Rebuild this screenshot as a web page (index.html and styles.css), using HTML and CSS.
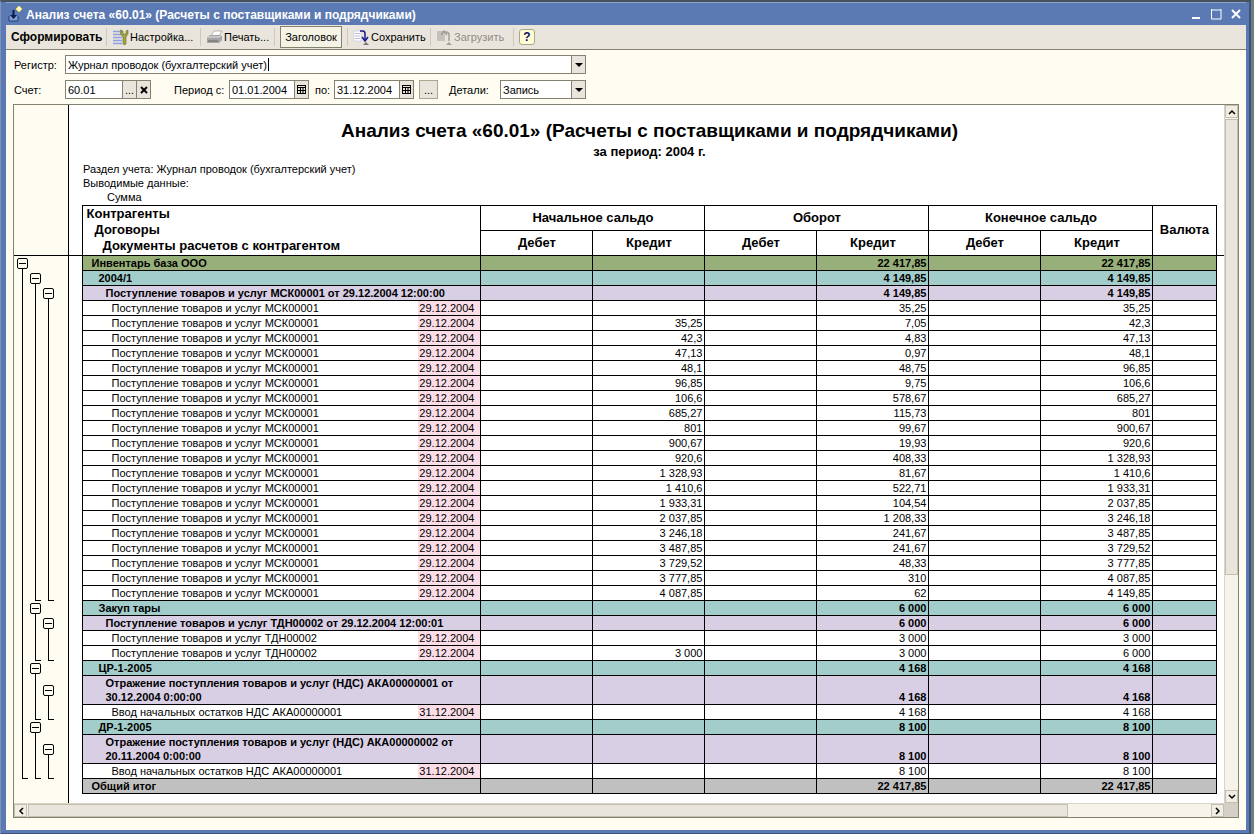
FILE: index.html
```html
<!DOCTYPE html>
<html lang="ru">
<head>
<meta charset="utf-8">
<title>Анализ счета «60.01»</title>
<link rel="stylesheet" href="styles.css">
</head>
<body>
<div class="window">
<header class="titlebar">
  <svg class="app-icon" width="16" height="18" viewBox="0 0 16 18"><path d="M1 11v5h9v-5" fill="#7f9fd0" stroke="#23407c"/><path d="M4.500 5h2v5h2.500l-3.500 4-3.500-4h2.500z" fill="#0b1c4c"/><path d="M11 1l3 3-3 3-3-3z" fill="#fffbc0" stroke="#f0e060"/></svg>
  <h1 class="caption">Анализ счета «60.01» (Расчеты с поставщиками и подрядчиками)</h1>
  <div class="window-buttons">
    <button type="button" aria-label="Свернуть"><svg width="12" height="12"><path d="M2 10h8" stroke="#fff" stroke-width="2"/></svg></button>
    <button type="button" aria-label="Развернуть"><svg width="12" height="12"><path d="M1 2h10M1.500 1v10h9.500V1" fill="none" stroke="#fff"/></svg></button>
    <button type="button" aria-label="Закрыть"><svg width="12" height="12"><path d="M2 2l8 8M10 2l-8 8" stroke="#fff" stroke-width="2"/></svg></button>
  </div>
</header>
<div class="client">
<nav class="toolbar">
  <button type="button" class="tool tool-main">Сформировать</button>
  <span class="divider"></span>
  <button type="button" class="tool tool-settings"><svg width="17" height="17" viewBox="0 0 17 17"><path d="M1 2.500h9M1 5.500h9M1 8.500h9M1 11.500h9M1 14.500h9" stroke="#8f9fe0" stroke-width="1.500"/><path d="M8.500 1v4l2.500 3v7q1.500 1.500 3 0V8l2-3V1l-2 1v3h-3V2z" fill="#a3a24a" stroke="#6d6d25" stroke-width=".6"/></svg>Настройка...</button>
  <span class="divider"></span>
  <button type="button" class="tool tool-print"><svg width="17" height="17" viewBox="0 0 17 17"><path d="M5 7l3-5h8l-3 5z" fill="#fff" stroke="#999" stroke-width=".7"/><path d="M1 8l3-2h12v5l-3 3H1z" fill="#a5a5a5"/><path d="M1 8h12l3-2" fill="none" stroke="#e8e8e8"/><path d="M2 12h10" stroke="#666"/></svg>Печать...</button>
  <span class="divider"></span>
  <button type="button" class="tool tool-pressed" aria-pressed="true">Заголовок</button>
  <span class="divider"></span>
  <button type="button" class="tool tool-save"><svg width="17" height="17" viewBox="0 0 17 17"><path d="M1 2h7v10H1z" fill="#fff" stroke="#c5c9e6" stroke-width=".7"/><path d="M2 4.500h5M2 7h5M2 9.500h5" stroke="#b7bce0"/><path d="M7 2h3q2 0 2 3v6" fill="none" stroke="#17178a" stroke-width="1.500"/><path d="M9 8l3 4 3-4" fill="none" stroke="#17178a" stroke-width="1.500"/><path d="M10 16l3-3 3 3z" fill="#777"/></svg>Сохранить</button>
  <span class="divider"></span>
  <button type="button" class="tool tool-load" disabled><svg width="17" height="17" viewBox="0 0 17 17"><path d="M1 2h8v10H1z" fill="#c4c2bc"/><path d="M5 6l3-4 3 4M8 3h2q3 0 3 3v6" fill="none" stroke="#a09e98" stroke-width="1.500"/><path d="M10 16l3-3 3 3z" fill="#a09e98"/></svg>Загрузить</button>
  <span class="divider"></span>
  <button type="button" class="help" aria-label="Справка">?</button>
</nav>
<form class="filters">
  <div class="filter-row">
    <label class="lead" for="register">Регистр:</label>
    <div class="field field-register"><input id="register" value="Журнал проводок (бухгалтерский учет)"><span class="caret"></span><button type="button" aria-label="Выбрать"><svg width="8" height="4"><path d="M0 0h8L4 4z"/></svg></button></div>
  </div>
  <div class="filter-row">
    <label class="lead" for="account">Счет:</label>
    <div class="field field-account"><input id="account" value="60.01"><button type="button">...</button><button type="button" aria-label="Очистить"><svg width="8" height="8"><path d="M1 1l6 6M7 1L1 7" stroke="#000" stroke-width="2"/></svg></button></div>
    <label class="label-from" for="from">Период с:</label>
    <div class="field field-date"><input id="from" value="01.01.2004"><button type="button" aria-label="Календарь"><svg width="9" height="10"><path d="M0 .500h9M0 2.500h9M0 5.500h9M0 8.500h9M.500 0v9M3.500 2v7M6 2v7M8.500 0v9" stroke="#000"/></svg></button></div>
    <label class="label-to" for="to">по:</label>
    <div class="field field-date"><input id="to" value="31.12.2004"><button type="button" aria-label="Календарь"><svg width="9" height="10"><path d="M0 .500h9M0 2.500h9M0 5.500h9M0 8.500h9M.500 0v9M3.500 2v7M6 2v7M8.500 0v9" stroke="#000"/></svg></button></div>
    <button type="button" class="period">...</button>
    <label class="label-details" for="details">Детали:</label>
    <div class="field field-details"><select id="details"><option>Запись</option></select><span class="drop"><svg width="8" height="4"><path d="M0 0h8L4 4z"/></svg></span></div>
  </div>
</form>
<main class="sheet">
<table class="report">
<colgroup><col class="c-gutter"><col class="c-margin"><col><col class="c-date"><col class="c-sum"><col class="c-sum"><col class="c-sum"><col class="c-sum"><col class="c-sum"><col class="c-sum"><col class="c-currency"><col class="c-edge"></colgroup>
<thead>
<tr><td class="gutter gutter-top" rowspan="3"></td><td class="ruled" rowspan="3"></td><td class="intro" colspan="9"><h2>Анализ счета «60.01» (Расчеты с поставщиками и подрядчиками)</h2><p class="span">за период: 2004 г.</p><p class="note">Раздел учета: Журнал проводок (бухгалтерский учет)</p><p class="note">Выводимые данные:</p><p class="note note-sub">Сумма</p></td><td class="ruled" rowspan="3"></td></tr>
<tr class="head"><th class="dims" colspan="2" rowspan="2"><div>Контрагенты</div><div class="in-1">Договоры</div><div class="in-2">Документы расчетов с контрагентом</div></th><th colspan="2">Начальное сальдо</th><th colspan="2">Оборот</th><th colspan="2">Конечное сальдо</th><th rowspan="2">Валюта</th></tr>
<tr class="head"><th>Дебет</th><th>Кредит</th><th>Дебет</th><th>Кредит</th><th>Дебет</th><th>Кредит</th></tr>
</thead>
<tbody>
<tr class="party"><td class="gutter" rowspan="35"><div class="tree">
<div class="node n-party"><button type="button" aria-label="Свернуть"></button></div>
<div class="node n-a"><button type="button" aria-label="Свернуть"></button></div>
<div class="node n-a-doc"><button type="button" aria-label="Свернуть"></button></div>
<div class="node n-b"><button type="button" aria-label="Свернуть"></button></div>
<div class="node n-b-doc"><button type="button" aria-label="Свернуть"></button></div>
<div class="node n-c"><button type="button" aria-label="Свернуть"></button></div>
<div class="node n-c-doc tall"><button type="button" aria-label="Свернуть"></button></div>
<div class="node n-d"><button type="button" aria-label="Свернуть"></button></div>
<div class="node n-d-doc tall"><button type="button" aria-label="Свернуть"></button></div>
</div></td><td class="blank" rowspan="35"></td><td colspan="2">Инвентарь база ООО</td><td></td><td></td><td></td><td>22 417,85</td><td></td><td>22 417,85</td><td></td><td class="blank" rowspan="35"></td></tr>
<tr class="contract"><td colspan="2">2004/1</td><td></td><td></td><td></td><td>4 149,85</td><td></td><td>4 149,85</td><td></td></tr>
<tr class="doc"><td colspan="2">Поступление товаров и услуг МСК00001 от 29.12.2004 12:00:00</td><td></td><td></td><td></td><td>4 149,85</td><td></td><td>4 149,85</td><td></td></tr>
<tr class="entry"><td>Поступление товаров и услуг МСК00001</td><td>29.12.2004</td><td></td><td></td><td></td><td>35,25</td><td></td><td>35,25</td><td></td></tr>
<tr class="entry"><td>Поступление товаров и услуг МСК00001</td><td>29.12.2004</td><td></td><td>35,25</td><td></td><td>7,05</td><td></td><td>42,3</td><td></td></tr>
<tr class="entry"><td>Поступление товаров и услуг МСК00001</td><td>29.12.2004</td><td></td><td>42,3</td><td></td><td>4,83</td><td></td><td>47,13</td><td></td></tr>
<tr class="entry"><td>Поступление товаров и услуг МСК00001</td><td>29.12.2004</td><td></td><td>47,13</td><td></td><td>0,97</td><td></td><td>48,1</td><td></td></tr>
<tr class="entry"><td>Поступление товаров и услуг МСК00001</td><td>29.12.2004</td><td></td><td>48,1</td><td></td><td>48,75</td><td></td><td>96,85</td><td></td></tr>
<tr class="entry"><td>Поступление товаров и услуг МСК00001</td><td>29.12.2004</td><td></td><td>96,85</td><td></td><td>9,75</td><td></td><td>106,6</td><td></td></tr>
<tr class="entry"><td>Поступление товаров и услуг МСК00001</td><td>29.12.2004</td><td></td><td>106,6</td><td></td><td>578,67</td><td></td><td>685,27</td><td></td></tr>
<tr class="entry"><td>Поступление товаров и услуг МСК00001</td><td>29.12.2004</td><td></td><td>685,27</td><td></td><td>115,73</td><td></td><td>801</td><td></td></tr>
<tr class="entry"><td>Поступление товаров и услуг МСК00001</td><td>29.12.2004</td><td></td><td>801</td><td></td><td>99,67</td><td></td><td>900,67</td><td></td></tr>
<tr class="entry"><td>Поступление товаров и услуг МСК00001</td><td>29.12.2004</td><td></td><td>900,67</td><td></td><td>19,93</td><td></td><td>920,6</td><td></td></tr>
<tr class="entry"><td>Поступление товаров и услуг МСК00001</td><td>29.12.2004</td><td></td><td>920,6</td><td></td><td>408,33</td><td></td><td>1 328,93</td><td></td></tr>
<tr class="entry"><td>Поступление товаров и услуг МСК00001</td><td>29.12.2004</td><td></td><td>1 328,93</td><td></td><td>81,67</td><td></td><td>1 410,6</td><td></td></tr>
<tr class="entry"><td>Поступление товаров и услуг МСК00001</td><td>29.12.2004</td><td></td><td>1 410,6</td><td></td><td>522,71</td><td></td><td>1 933,31</td><td></td></tr>
<tr class="entry"><td>Поступление товаров и услуг МСК00001</td><td>29.12.2004</td><td></td><td>1 933,31</td><td></td><td>104,54</td><td></td><td>2 037,85</td><td></td></tr>
<tr class="entry"><td>Поступление товаров и услуг МСК00001</td><td>29.12.2004</td><td></td><td>2 037,85</td><td></td><td>1 208,33</td><td></td><td>3 246,18</td><td></td></tr>
<tr class="entry"><td>Поступление товаров и услуг МСК00001</td><td>29.12.2004</td><td></td><td>3 246,18</td><td></td><td>241,67</td><td></td><td>3 487,85</td><td></td></tr>
<tr class="entry"><td>Поступление товаров и услуг МСК00001</td><td>29.12.2004</td><td></td><td>3 487,85</td><td></td><td>241,67</td><td></td><td>3 729,52</td><td></td></tr>
<tr class="entry"><td>Поступление товаров и услуг МСК00001</td><td>29.12.2004</td><td></td><td>3 729,52</td><td></td><td>48,33</td><td></td><td>3 777,85</td><td></td></tr>
<tr class="entry"><td>Поступление товаров и услуг МСК00001</td><td>29.12.2004</td><td></td><td>3 777,85</td><td></td><td>310</td><td></td><td>4 087,85</td><td></td></tr>
<tr class="entry"><td>Поступление товаров и услуг МСК00001</td><td>29.12.2004</td><td></td><td>4 087,85</td><td></td><td>62</td><td></td><td>4 149,85</td><td></td></tr>
<tr class="contract"><td colspan="2">Закуп тары</td><td></td><td></td><td></td><td>6 000</td><td></td><td>6 000</td><td></td></tr>
<tr class="doc"><td colspan="2">Поступление товаров и услуг ТДН00002 от 29.12.2004 12:00:01</td><td></td><td></td><td></td><td>6 000</td><td></td><td>6 000</td><td></td></tr>
<tr class="entry"><td>Поступление товаров и услуг ТДН00002</td><td>29.12.2004</td><td></td><td></td><td></td><td>3 000</td><td></td><td>3 000</td><td></td></tr>
<tr class="entry"><td>Поступление товаров и услуг ТДН00002</td><td>29.12.2004</td><td></td><td>3 000</td><td></td><td>3 000</td><td></td><td>6 000</td><td></td></tr>
<tr class="contract"><td colspan="2">ЦР-1-2005</td><td></td><td></td><td></td><td>4 168</td><td></td><td>4 168</td><td></td></tr>
<tr class="doc"><td colspan="2">Отражение поступления товаров и услуг (НДС) АКА00000001 от<br>30.12.2004 0:00:00</td><td></td><td></td><td></td><td>4 168</td><td></td><td>4 168</td><td></td></tr>
<tr class="entry"><td>Ввод начальных остатков НДС АКА00000001</td><td>31.12.2004</td><td></td><td></td><td></td><td>4 168</td><td></td><td>4 168</td><td></td></tr>
<tr class="contract"><td colspan="2">ДР-1-2005</td><td></td><td></td><td></td><td>8 100</td><td></td><td>8 100</td><td></td></tr>
<tr class="doc"><td colspan="2">Отражение поступления товаров и услуг (НДС) АКА00000002 от<br>20.11.2004 0:00:00</td><td></td><td></td><td></td><td>8 100</td><td></td><td>8 100</td><td></td></tr>
<tr class="entry"><td>Ввод начальных остатков НДС АКА00000001</td><td>31.12.2004</td><td></td><td></td><td></td><td>8 100</td><td></td><td>8 100</td><td></td></tr>
<tr class="total"><td colspan="2">Общий итог</td><td></td><td></td><td></td><td>22 417,85</td><td></td><td>22 417,85</td><td></td></tr>
<tr class="tail"><td colspan="9"></td></tr>
</tbody>
</table>
<div class="scroll scroll-v"><button type="button" aria-label="Вверх"><svg width="8" height="8"><path d="M1 6l3-3 3 3" fill="none" stroke="#000" stroke-width="1.500"/></svg></button><div class="track"><div class="thumb"></div></div><button type="button" aria-label="Вниз"><svg width="8" height="8"><path d="M1 2l3 3 3-3" fill="none" stroke="#000" stroke-width="1.500"/></svg></button></div>
<div class="scroll scroll-h"><button type="button" aria-label="Влево"><svg width="8" height="8"><path d="M6 1L3 4l3 3" fill="none" stroke="#000" stroke-width="1.500"/></svg></button><div class="track"><div class="thumb"></div></div><button type="button" aria-label="Вправо"><svg width="8" height="8"><path d="M2 1l3 3-3 3" fill="none" stroke="#000" stroke-width="1.500"/></svg></button></div>
<div class="corner"></div>
</main>
</div>
</div>
</body>
</html>
```
FILE: styles.css
```css
* { box-sizing: border-box; }
body { margin: 0; font-family: "Liberation Sans", Arial, sans-serif; font-size: 11px; line-height: 14px; color: #000; background: #6f7f78; }
button, input, select { font: inherit; color: inherit; margin: 0; padding: 0; border: 0; border-radius: 0; background: none; }
svg { display: block; flex: none; }
h1, h2, p { margin: 0; }

.window { display: flex; flex-direction: column; min-height: 100vh; padding: 0 3px 3px 5px; margin-right: 3px; background: #5b7ab3; border-top: 2px solid #46535a; border-left: 1px solid #7d93b8; border-right: 2px solid #3b5180; border-bottom: 2px solid #3b5180; }
.titlebar { display: flex; align-items: center; height: 23px; padding: 0 4px 0 2px; color: #fff; border-top: 1px solid #8ba3cd; }
.app-icon { margin-right: 2px; }
.caption { flex: 1; font-size: 12px; line-height: 16px; padding-top: 1px; }
.window-buttons { display: flex; gap: 8px; }

.client { display: flex; flex-direction: column; flex: 1; background: #fffdf2; padding: 0 7px 12px; }
.toolbar { display: flex; align-items: center; height: 25px; margin: 0 -7px; padding: 0 5px; background: #e9e5dc; border-bottom: 1px solid #85816f; }
.tool { display: flex; align-items: center; gap: 1px; height: 22px; white-space: nowrap; }
.tool-main { font-size: 12px; font-weight: bold; width: 90px; }
.tool-settings { width: 83px; }
.tool-print { width: 63px; }
.tool-pressed { justify-content: center; width: 62px; border: 1px solid #85816f; background: #f5f2e6; }
.tool-save { width: 72px; }
.tool-load { width: 72px; color: #8f8c84; }
.divider { flex: none; width: 1px; height: 18px; margin: 0 5px; background: #cdc8ba; }
.help { width: 16px; height: 16px; border: 1px solid #aaa78c; border-radius: 3px; background: #ffffd8; color: #101060; font-size: 12px; font-weight: bold; line-height: 14px; }

.filters { display: flex; flex-direction: column; gap: 6px; padding: 5px 0; }
.filter-row { display: flex; align-items: center; padding-left: 1px; }
.lead { width: 51px; }
.field { position: relative; display: flex; height: 19px; border: 1px solid #85816f; background: #fff; }
.field input, .field select { flex: 1; min-width: 0; width: 100%; padding: 0 2px; outline: 0; appearance: none; }
.field button, .drop { display: flex; align-items: center; justify-content: center; flex: none; width: 14px; border-left: 1px solid #85816f; background: #e9e5dc; }
.caret { position: absolute; left: 202px; top: 2px; width: 1px; height: 13px; background: #000; }
.field-register { width: 521px; }
.field-account { width: 86px; }
.field-date { width: 80px; }
.field-details { width: 86px; }
.label-from { width: 55px; margin-left: 23px; }
.label-to { width: 19px; margin-left: 6px; }
.period { width: 19px; height: 19px; margin: 0 11px 0 5px; border: 1px solid #aaa78c; background: #e9e5dc; }
.label-details { width: 51px; }

.sheet { display: grid; flex: 1; grid-template-columns: minmax(0, 1fr) 14px; grid-template-rows: 1fr 14px; border: 1px solid #85816f; background: #fff; }
.report { width: 100%; border-collapse: collapse; table-layout: fixed; font-size: 11px; }
.c-gutter { width: 54px; }
.c-margin { width: 14px; }
.c-date { width: 63px; }
.c-sum { width: 112px; }
.c-currency { width: 63px; }
.c-edge { width: 8px; }
.report td, .report th { padding: 0; border: 1px solid #000; }
.report .gutter { background: #fffdf2; border-width: 0 1px 0 0; vertical-align: top; }
.report .gutter-top, .report .ruled { border-bottom-width: 1px; }
.report .ruled { border-width: 0 0 1px; }
.report .blank { border: 0; }
.report .intro { height: 100px; padding: 15px 0 0 1px; border-width: 0 0 1px; vertical-align: top; }
.intro h2 { font-size: 19px; line-height: 22px; text-align: center; }
.intro .span { font-size: 13px; line-height: 16px; font-weight: bold; text-align: center; margin: 2px 0; }
.note { line-height: 14px; }
.note-sub { padding-left: 24px; }
.head { height: 25px; font-size: 13px; line-height: 16px; }
.report .dims { text-align: left; padding-left: 4px; }
.in-1 { padding-left: 8px; }
.in-2 { padding-left: 16px; }
.report tbody tr { height: 15px; }
tbody td { text-align: right; vertical-align: bottom; white-space: nowrap; }
.report tbody td:not(.gutter):not(.blank) { padding-right: 2px; }
.report tbody td[colspan="2"], .report .entry td:first-child { text-align: left; }
.party { background: #97b079; font-weight: bold; }
.contract { background: #a3cdcb; font-weight: bold; }
.doc { background: #d9cfe5; font-weight: bold; }
.total { background: #c0c0c0; font-weight: bold; }
.report .blank { background: #fff; }
.party td[colspan="2"], .total td[colspan="2"] { padding-left: 9px; }
.contract td[colspan="2"] { padding-left: 16px; }
.doc td[colspan="2"] { padding-left: 23px; }
.report .entry td:first-child { padding-left: 29px; border-right: 0; }
.report tbody .entry td:nth-child(2) { padding-right: 6px; border-left: 0; background: #fbdde8; }
.report .tail td { height: 10px; border-width: 1px 0 0; }
.report tbody .tail { height: 10px; }

.tree { display: grid; padding-left: 2px; grid-template-columns: repeat(3, 13px); grid-template-rows: repeat(28, 15px) 29px 15px 15px 29px 15px; }
.node { display: flex; flex-direction: column; padding: 2px 0 0 1px; }
.node.tall { padding-top: 9px; }
.node button { position: relative; flex: none; width: 11px; height: 11px; border: 1px solid #000; border-radius: 2px; background: linear-gradient(#000, #000) center / 7px 1px no-repeat; }
.node::after { content: ""; flex: 1; width: 5px; margin-left: 5px; border-left: 1px solid #000; border-bottom: 1px solid #000; }
.n-party { grid-area: 1 / 1 / 34 / 2; }
.n-a { grid-area: 2 / 2 / 24 / 3; }
.n-a-doc { grid-area: 3 / 3 / 24 / 4; }
.n-b { grid-area: 24 / 2 / 28 / 3; }
.n-b-doc { grid-area: 25 / 3 / 28 / 4; }
.n-c { grid-area: 28 / 2 / 31 / 3; }
.n-c-doc { grid-area: 29 / 3 / 31 / 4; }
.n-d { grid-area: 31 / 2 / 34 / 3; }
.n-d-doc { grid-area: 32 / 3 / 34 / 4; }

.scroll { display: flex; background: #f6f4ea; }
.scroll-v { flex-direction: column; border-left: 1px solid #d8d4c6; }
.scroll-h { border-top: 1px solid #d8d4c6; }
.scroll button { display: flex; align-items: center; justify-content: center; flex: none; width: 13px; height: 13px; border: 1px solid #c4c0b0; background: #f0ede2; }
.track { display: flex; flex: 1; }
.scroll-v .track { flex-direction: column; padding: 1px 0; }
.scroll-h .track { padding: 0 1px; }
.thumb { border: 1px solid #c4c0b0; background: #e9e5dc; }
.scroll-v .thumb { height: 68%; }
.scroll-h .thumb { width: 88%; height: 13px; }
.corner { background: #d4d0c8; }
```
